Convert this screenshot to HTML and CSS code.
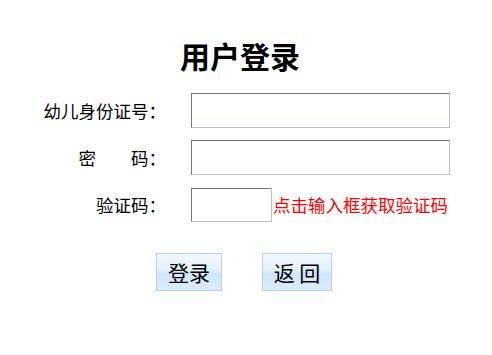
FILE: index.html
```html
<!DOCTYPE html>
<html lang="zh-CN">
  <head>
    <meta charset="UTF-8" />
    <meta name="viewport" content="width=device-width, initial-scale=1.0" />
    <title>用户登录</title>
    <link rel="stylesheet" href="styles.css">
  </head>
  <body>
    <section id="login">
      <h1 class="title">用户登录</h1>
      <form class="login-form">
        <div class="row">
          <label class="label" for="idcard">幼儿身份证号：</label>
          <input class="field" type="text" id="idcard" />
        </div>
        <div class="row">
          <label class="label" for="pwd">密&emsp;&emsp;码：</label>
          <input class="field" type="password" id="pwd" />
        </div>
        <div class="row">
          <label class="label" for="code">验证码：</label>
          <input class="field code" type="text" id="code" />
          <span class="hint">点击输入框获取验证码</span>
        </div>
        <div class="buttons">
          <button type="button" class="btn login">登录</button>
          <button type="button" class="btn back">返 回</button>
        </div>
      </form>
    </section>
  </body>
</html>
```

FILE: styles.css
```css
/* Login page */
body {
  margin: 0;
  background: #fff;
  color: #000;
  font-family: "Noto Sans CJK SC", "Liberation Sans", sans-serif;
}

#login {
  width: 420px;
  margin-left: 30px;
  padding-top: 35px;
}

.title {
  margin: 0;
  font-size: 30px;
  line-height: 40px;
  font-weight: bold;
  text-align: center;
}

.login-form {
  margin-top: 18px;
}

.row {
  display: flex;
  align-items: center;
  height: 35px;
  margin-bottom: 12px;
}

.label {
  width: 136px;
  text-align: right;
  font-size: 17.5px;
}

.field {
  box-sizing: border-box;
  width: 259px;
  height: 35px;
  margin: 0 0 0 25px;
  padding: 0 4px;
  border: 1px solid;
  border-color: #71777e #b9c2cb #b9c2cb #71777e;
  background: #fff;
  font-size: 16px;
  outline: none;
}

.field.code {
  width: 81px;
  height: 34px;
}

.hint {
  margin-left: 1px;
  color: #ff0000;
  font-size: 17.5px;
  white-space: nowrap;
}

.buttons {
  display: flex;
  gap: 40px;
  padding-left: 126px;
  margin-top: 31px;
}

.btn {
  box-sizing: border-box;
  height: 38px;
  padding: 0;
  border: 1px solid #bcd1e9;
  background: linear-gradient(#f2f8fe 0%, #e3f0fc 45%, #cfe6fa 55%, #dcedfb 100%);
  font-family: "Noto Sans CJK SC", sans-serif;
  font-size: 21px;
  color: #000;
}

.btn.login {
  width: 66px;
}

.btn.back {
  width: 70px;
}
```
